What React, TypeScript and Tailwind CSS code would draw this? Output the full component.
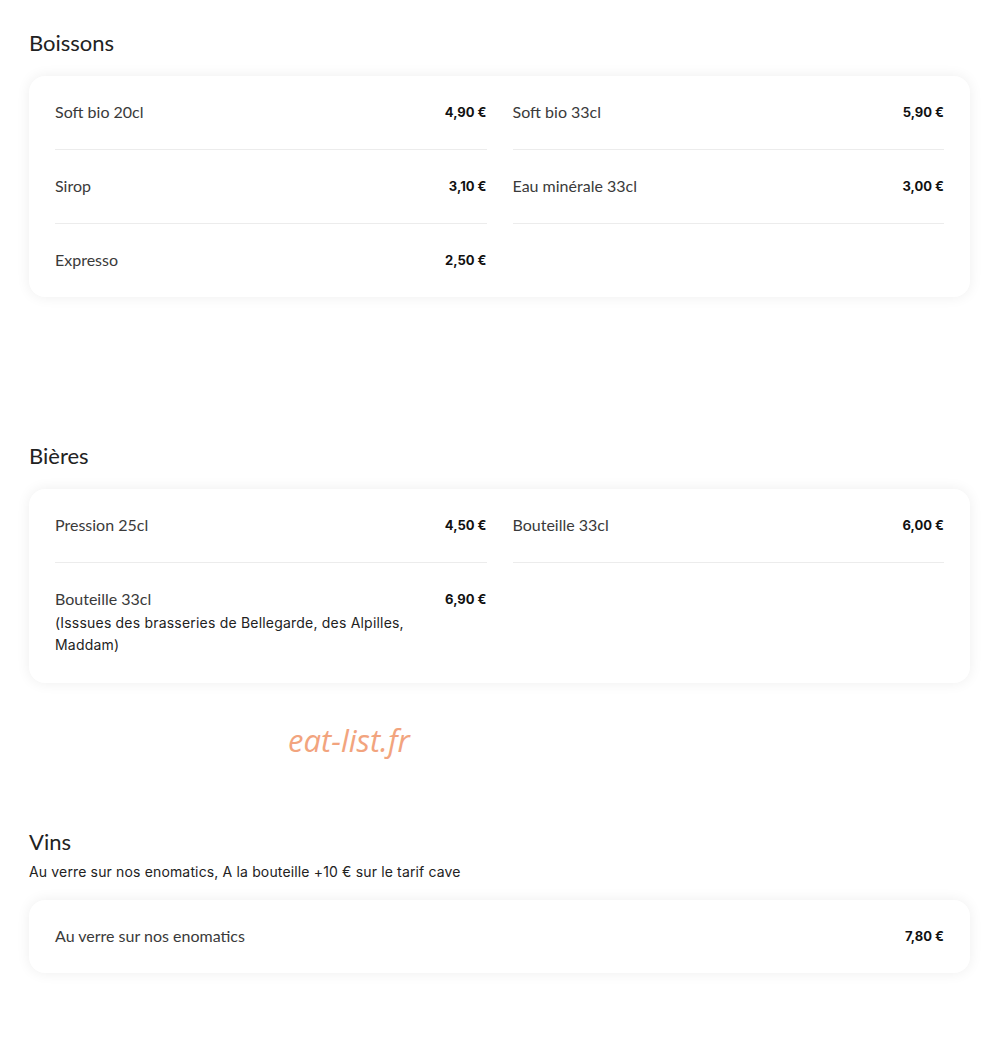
import React from "react";

type Item = { name: string; price: string; desc?: string; full?: boolean };

const Card = ({ items }: { items: Item[] }) => (
  <div className="mt-[18px] rounded-[16px] bg-white px-[26px] shadow-[0_0_14px_rgba(0,0,0,0.07)]">
    <div className="grid grid-cols-2 gap-x-[26px]">
      {items.map((it, i) => (
        <div
          key={i}
          className={
            "flex items-start justify-between gap-[32px] pt-[26px] pb-[27px] " +
            (i < items.length - 1 ? "border-b border-[#ececec] " : "") +
            (it.full ? "col-span-2" : "")
          }
        >
          <div className="min-w-0 flex-1">
            <div className="font-['Lato'] text-[16px] leading-[20px] text-[#3a3a3a]">{it.name}</div>
            {it.desc && (
              <div className="mt-[3px] font-['Inter'] text-[14px] leading-[22px] tracking-[0.2px] text-[#222]">
                {it.desc}
              </div>
            )}
          </div>
          <div className="pt-[1px] font-['Inter'] text-[13px] font-bold leading-[18px] text-[#111] whitespace-nowrap">
            {it.price}
          </div>
        </div>
      ))}
    </div>
  </div>
);

export default function App() {
  return (
    <div className="relative min-h-[1054px] bg-white pl-[29px] pr-[19px] pt-[28px] font-['Lato',sans-serif]">
      <section>
        <h2 className="font-['Lato'] text-[22px] leading-[30px] text-[#222]">Boissons</h2>
        <Card
          items={[
            { name: "Soft bio 20cl", price: "4,90 €" },
            { name: "Soft bio 33cl", price: "5,90 €" },
            { name: "Sirop", price: "3,10 €" },
            { name: "Eau minérale 33cl", price: "3,00 €" },
            { name: "Expresso", price: "2,50 €" },
          ]}
        />
      </section>
      <section className="mt-[144px]">
        <h2 className="font-['Lato'] text-[22px] leading-[30px] text-[#222]">Bières</h2>
        <div className="mt-[1px]">
          <Card
            items={[
              { name: "Pression 25cl", price: "4,50 €" },
              { name: "Bouteille 33cl", price: "6,00 €" },
              {
                name: "Bouteille 33cl",
                price: "6,90 €",
                desc: "(Isssues des brasseries de Bellegarde, des Alpilles, Maddam)",
              },
            ]}
          />
        </div>
      </section>
      <section className="mt-[144px]">
        <h2 className="font-['Lato'] text-[22px] leading-[30px] text-[#222]">Vins</h2>
        <p className="mt-[5px] font-['Inter'] text-[14px] leading-[20px] tracking-[0.15px] text-[#222]">
          Au verre sur nos enomatics, A la bouteille +10 € sur le tarif cave
        </p>
        <div className="mt-[5px]">
          <Card items={[{ name: "Au verre sur nos enomatics", price: "7,80 €", full: true }]} />
        </div>
      </section>
      <div className="pointer-events-none absolute left-[288px] top-[720px] font-['Open_Sans'] text-[31px] italic leading-[40px] text-[#f2a47e]">
        eat-list.fr
      </div>
    </div>
  );
}
